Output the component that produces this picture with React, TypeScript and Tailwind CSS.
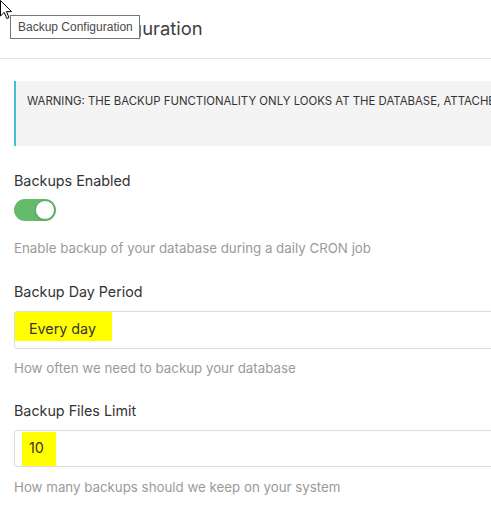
const inter = { fontFamily: "Inter, 'Noto Sans', sans-serif" };

const Field: React.FC<{ label: string; help: string; children: React.ReactNode; top: string }> = ({
  label,
  help,
  children,
  top,
}) => {
  return (
    <div className={top}>
      <label className="block text-[14.3px] leading-5 text-[#333]">{label}</label>
      {children}
      <p className="text-[13.3px] leading-[18px] text-[#9a9a9a]">{help}</p>
    </div>
  );
};

export default function App() {
  return (
    <div className="relative w-[491px] h-[523px] overflow-hidden bg-white" style={inter}>
      {/* Header */}
      <div className="w-[720px] px-[14px] pt-[14px] pb-4 border-b border-[#e2e2e2]">
        <h1 className="text-[18.4px] leading-7 text-[#404040] font-normal">Backup Configuration</h1>
      </div>

      <div className="w-[720px] pl-[14px]">
        {/* Warning */}
        <div className="mt-[22px] h-[65px] bg-[#f4f4f4] border-l-2 border-[#45bcd9] pl-[11px] pt-[12px]">
          <p className="text-[11.4px] leading-4 text-[#333] whitespace-nowrap">
            WARNING: THE BACKUP FUNCTIONALITY ONLY LOOKS AT THE DATABASE, ATTACHED FILES ARE NOT BACKED UP.
          </p>
        </div>

        <Field label="Backups Enabled" help="Enable backup of your database during a daily CRON job" top="mt-[25px]">
          <div className="mt-2 mb-[18px] w-[42px] h-[22px] rounded-full bg-[#66bb6a] flex items-center justify-end pr-px">
            <span className="w-5 h-5 rounded-full bg-white border border-[#5aa85e] shadow-sm" />
          </div>
        </Field>

        <Field label="Backup Day Period" help="How often we need to backup your database" top="mt-[25px]">
          <div className="mt-[9px] mb-[10px] h-[38px] border border-[#dcdcdc] rounded-[3px] flex items-start">
            <span className="w-[97px] h-[29px] bg-[#ffff00] pl-[14px] pt-[7px] text-[14.3px] leading-5 text-[#333]">
              Every day
            </span>
          </div>
        </Field>

        <Field label="Backup Files Limit" help="How many backups should we keep on your system" top="mt-[24px]">
          <div className="mt-[9px] mb-[11px] h-[37px] border border-[#dcdcdc] rounded-[3px] flex items-end">
            <span className="ml-[7px] w-[34px] h-[34px] bg-[#ffff00] pl-[7px] pt-[6px] text-[14.3px] leading-5 text-[#333]">
              10
            </span>
          </div>
        </Field>
      </div>

      {/* Tooltip */}
      <div
        className="absolute left-[10px] top-[15px] h-[24px] w-[130px] bg-white border border-[#767676] flex items-center pl-[7px] text-[12px] text-[#4a4a4a]"
        style={{ fontFamily: "'Liberation Sans', Arial, sans-serif" }}
      >
        Backup Configuration
      </div>

      {/* Cursor */}
      <svg className="absolute left-0 top-0" width="14" height="21" viewBox="0 0 14 21">
        <path d="M0.5 0.5 L0.5 16 L4.2 12.4 L6.8 18.5 L9 17.6 L6.5 11.6 L11.5 11.6 Z" fill="white" stroke="black" strokeWidth="1" strokeLinejoin="round" />
      </svg>
    </div>
  );
}
